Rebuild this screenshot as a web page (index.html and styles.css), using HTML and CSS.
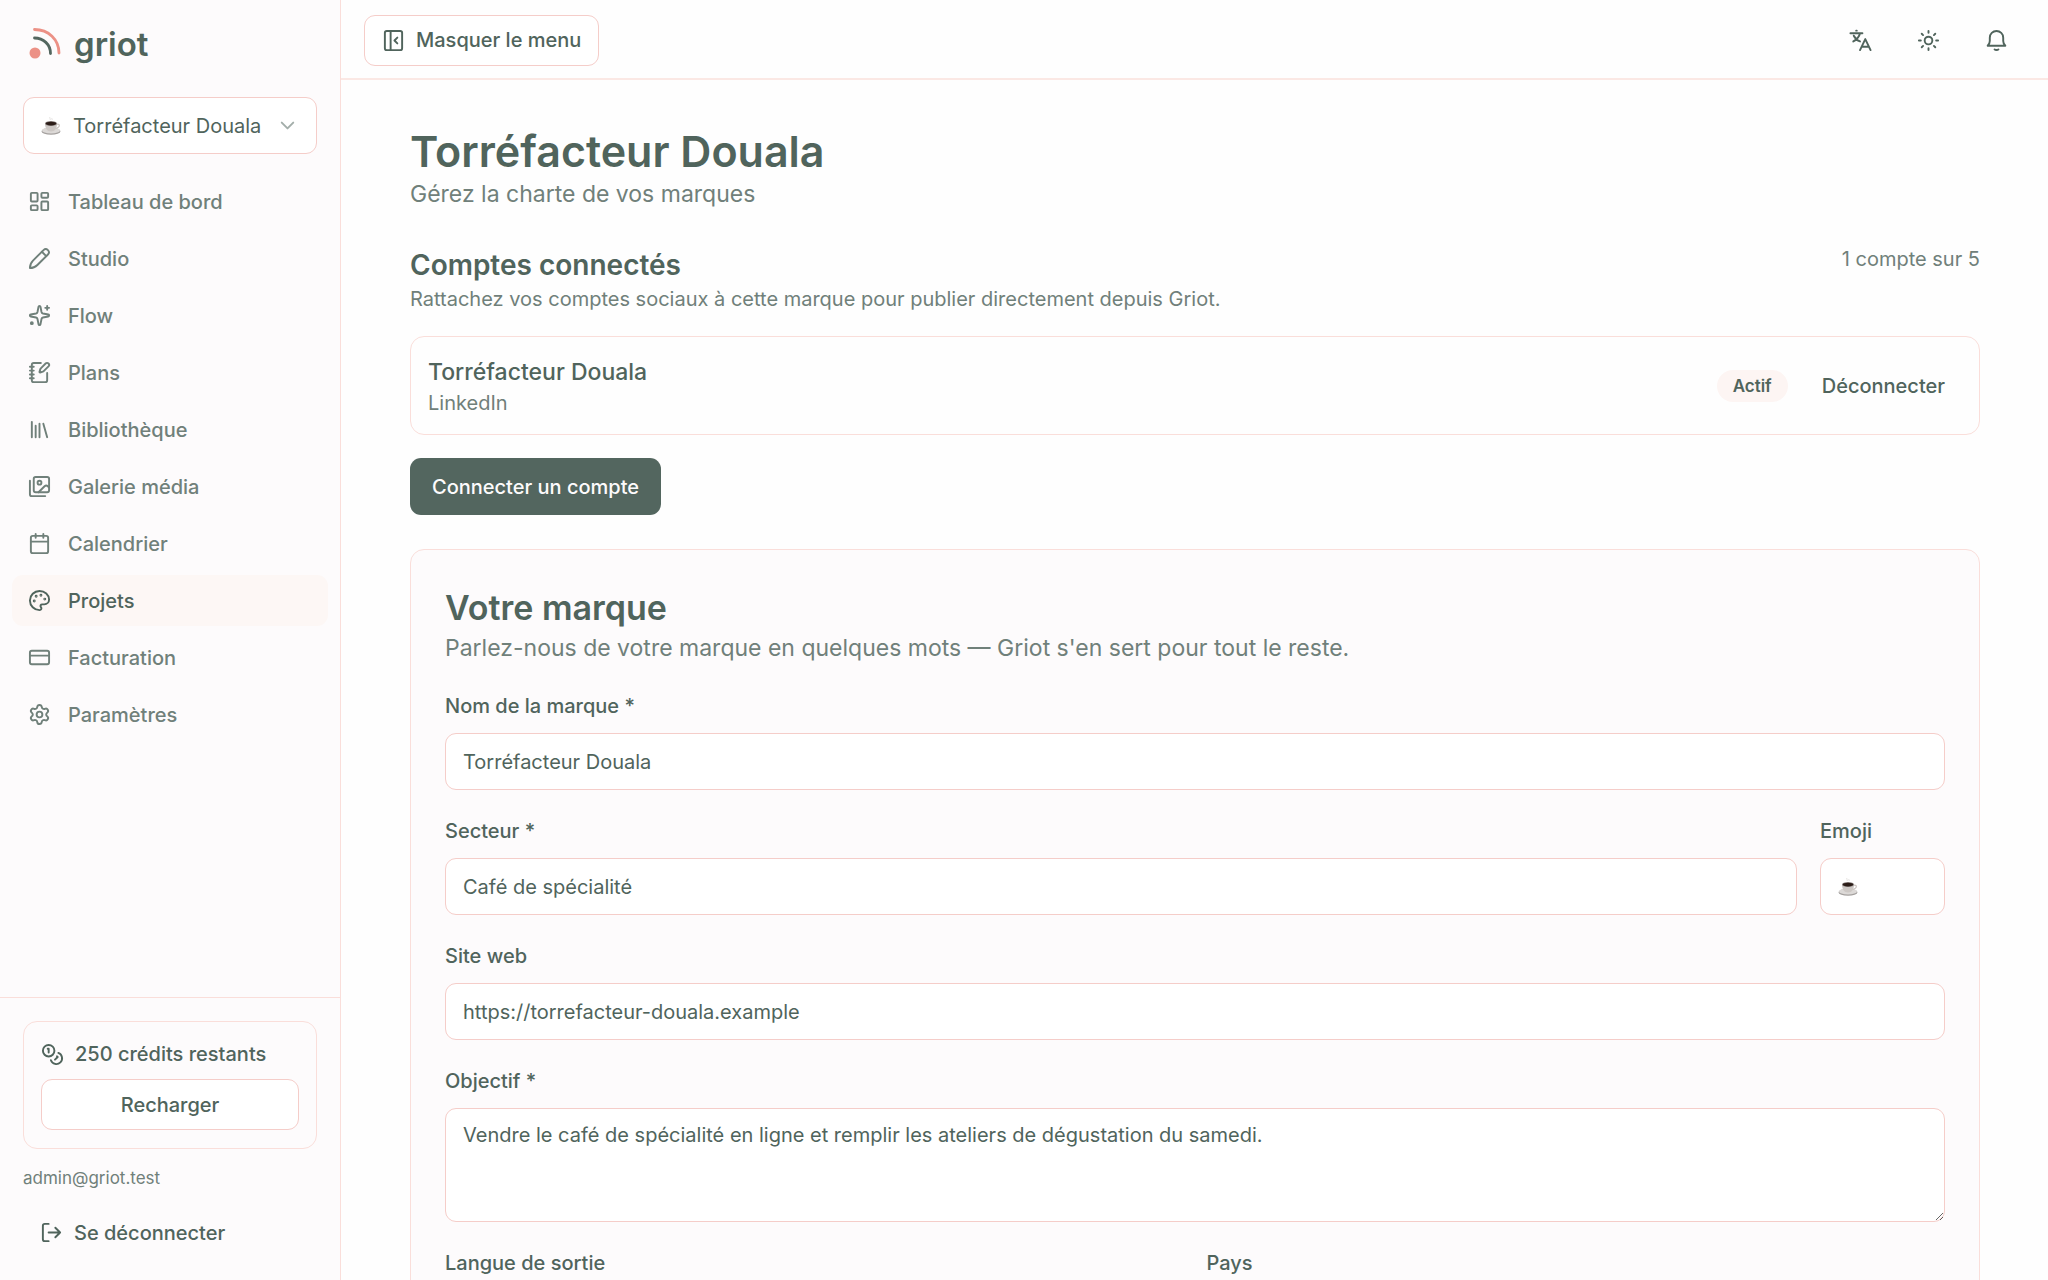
FILE: index.html
```
<!DOCTYPE html>
<html lang="fr">
<head>
    <meta charset="UTF-8">
    <meta name="viewport" content="width=device-width, initial-scale=1.0">
    <title>Griot - Torréfacteur Douala</title>
    <link rel="stylesheet" href="styles.css">
</head>
<body>
    <!-- Coffee cup shared by the project picker and the emoji field -->
    <svg class="defs" aria-hidden="true">
        <symbol id="coffee" viewBox="0 0 20 20">
            <path d="M9 1c-1 1 1 2 0 3M11 2c-.6.8.6 1.4 0 2" fill="none" stroke="#d8d5d3" stroke-width=".7"/>
            <ellipse cx="10" cy="15.2" rx="9.5" ry="3.6" fill="#a5a19f"/>
            <ellipse cx="10" cy="14.4" rx="9" ry="3" fill="#dcd9d7"/>
            <path d="M15 8.5c4-1.5 5 2.5-.5 4" fill="none" stroke="#c9c2be" stroke-width="1.2"/>
            <path d="M4 7.5c0 4.500 2 8 6 8s6-3.500 6-8Z" fill="#cdc8c5"/>
            <ellipse cx="10" cy="7.5" rx="6" ry="2.4" fill="#8b8380"/>
            <ellipse cx="10" cy="7.6" rx="5.2" ry="1.8" fill="#2c1d18"/>
        </symbol>
    </svg>

    <div class="app">
        <aside class="sidebar">
            <a class="logo" href="#">
                <svg class="logo-mark" viewBox="0 0 32 32" fill="none" stroke-width="2.8" stroke-linecap="round">
                    <circle cx="7" cy="25" r="5.5" fill="#ec9186"/>
                    <path d="M6.500 1.500c14 0 24.500 10 24.500 23.500" stroke="#ec9186"/>
                    <path d="M6.500 10c9 0 16 6.500 16 15.500" stroke="#53665f"/>
                </svg>
                griot
            </a>

            <div class="picker">
                <svg class="emoji" aria-hidden="true"><use href="#coffee"/></svg>
                <select aria-label="Projet">
                    <option>Torréfacteur Douala</option>
                </select>
                <svg class="chevron" viewBox="0 0 24 24"><path d="m6 9 6 6 6-6"/></svg>
            </div>

            <nav class="nav">
                <a href="#"><svg class="icon" viewBox="0 0 24 24"><rect x="3" y="3" width="7" height="9" rx="1"/><rect x="14" y="3" width="7" height="5" rx="1"/><rect x="14" y="12" width="7" height="9" rx="1"/><rect x="3" y="16" width="7" height="5" rx="1"/></svg>Tableau de bord</a>
                <a href="#"><svg class="icon" viewBox="0 0 24 24"><path d="M20.8 3.2a3.3 3.3 0 0 0-4.600 0L5.200 14.200C3.200 16.200 2 19 2 22c3 0 5.800-1.200 7.800-3.200l11-11a3.300 3.300 0 0 0 0-4.600Z"/><path d="m14.500 5 4.500 4.500"/></svg>Studio</a>
                <a href="#"><svg class="icon" viewBox="0 0 24 24"><path d="M11 2.800c.2-1.100 1.800-1.100 2 0l1.100 5.600a2 2 0 0 0 1.500 1.500l5.600 1.100c1.100.2 1.100 1.800 0 2l-5.600 1.100a2 2 0 0 0-1.500 1.500L13 21.200c-.2 1.100-1.800 1.100-2 0l-1.100-5.600a2 2 0 0 0-1.500-1.500L2.800 13c-1.100-.2-1.100-1.800 0-2l5.600-1.100a2 2 0 0 0 1.500-1.500Z"/><path d="M20 2v4M22 4h-4"/><circle cx="4" cy="20" r="1"/></svg>Flow</a>
                <a href="#"><svg class="icon" viewBox="0 0 24 24"><path d="M13.400 2H6a2 2 0 0 0-2 2v16a2 2 0 0 0 2 2h12a2 2 0 0 0 2-2v-7.400M2 6h4M2 10h4M2 14h4M2 18h4"/><path d="M21.378 5.626a1 1 0 1 0-3.004-3.004l-5.010 5.012a2 2 0 0 0-.506.854l-.837 2.870a.5.5 0 0 0 .620.620l2.870-.837a2 2 0 0 0 .854-.506z"/></svg>Plans</a>
                <a href="#"><svg class="icon" viewBox="0 0 24 24"><path d="m16 6 4 14M12 6v14M8 8v12M4 4v16"/></svg>Bibliothèque</a>
                <a href="#"><svg class="icon" viewBox="0 0 24 24"><path d="M18 22H4a2 2 0 0 1-2-2V6"/><path d="m22 13-1.296-1.296a2.410 2.410 0 0 0-3.408 0L11 18"/><circle cx="12" cy="8" r="2"/><rect x="6" y="2" width="16" height="16" rx="2"/></svg>Galerie média</a>
                <a href="#"><svg class="icon" viewBox="0 0 24 24"><path d="M8 2v4M16 2v4M3 10h18"/><rect x="3" y="4" width="18" height="18" rx="2"/></svg>Calendrier</a>
                <a class="active" href="#"><svg class="icon" viewBox="0 0 24 24"><path d="M12 22a1 1 0 0 1 0-20 10 9 0 0 1 10 9 5 5 0 0 1-5 5h-2.250a1.750 1.750 0 0 0-1.400 2.800l.3.400a1.750 1.750 0 0 1-1.400 2.800z"/><circle class="dot" cx="13.5" cy="6.5" r=".5"/><circle class="dot" cx="17.5" cy="10.5" r=".5"/><circle class="dot" cx="6.5" cy="12.5" r=".5"/><circle class="dot" cx="8.5" cy="7.5" r=".5"/></svg>Projets</a>
                <a href="#"><svg class="icon" viewBox="0 0 24 24"><rect x="2" y="5" width="20" height="14" rx="2"/><path d="M2 10h20"/></svg>Facturation</a>
                <a href="#"><svg class="icon" viewBox="0 0 24 24"><path d="M9.671 4.136a2.340 2.340 0 0 1 4.659 0 2.340 2.340 0 0 0 3.319 1.915 2.340 2.340 0 0 1 2.330 4.033 2.340 2.340 0 0 0 0 3.831 2.340 2.340 0 0 1-2.330 4.033 2.340 2.340 0 0 0-3.319 1.915 2.340 2.340 0 0 1-4.659 0 2.340 2.340 0 0 0-3.320-1.915 2.340 2.340 0 0 1-2.330-4.033 2.340 2.340 0 0 0 0-3.831A2.340 2.340 0 0 1 6.350 6.051a2.340 2.340 0 0 0 3.319-1.915"/><circle cx="12" cy="12" r="3"/></svg>Paramètres</a>
            </nav>

            <div class="sidebar-footer">
                <div class="credits">
                    <p><svg class="icon" viewBox="0 0 24 24"><circle cx="8" cy="8" r="6"/><path d="M18.090 10.370A6 6 0 1 1 10.340 18M7 6h1v4M16.710 13.880l.7.710-2.820 2.820"/></svg>250 crédits restants</p>
                    <button class="btn btn-outline" type="button">Recharger</button>
                </div>
                <p class="email">admin@griot.test</p>
                <button class="btn btn-ghost" type="button"><svg class="icon" viewBox="0 0 24 24"><path d="M9 21H5a2 2 0 0 1-2-2V5a2 2 0 0 1 2-2h4M16 17l5-5-5-5M21 12H9"/></svg>Se déconnecter</button>
            </div>
        </aside>

        <div class="page">
            <header class="topbar">
                <button class="btn btn-outline" type="button"><svg class="icon" viewBox="0 0 24 24"><rect x="3" y="2" width="18" height="20" rx="2"/><path d="M9 2v20M16 15l-3-3 3-3"/></svg>Masquer le menu</button>
                <div class="actions">
                    <button class="icon-btn" type="button" aria-label="Langue"><svg class="icon" viewBox="0 0 24 24"><path d="M1.500 4.500H14M7.500 1.700h.6M11.500 4.500c-.8 3.500-3.300 6.500-7 8.500M5 7c1.500 3 3.500 5 6.500 6M11.500 22 17 10.500 22.500 22M13.300 18.500h7.400"/></svg></button>
                    <button class="icon-btn" type="button" aria-label="Thème"><svg class="icon" viewBox="0 0 24 24"><circle cx="12" cy="12" r="4"/><path d="M12 2v2M12 20v2M4.930 4.930l1.410 1.410M17.660 17.660l1.410 1.410M2 12h2M20 12h2M6.340 17.660l-1.410 1.410M19.070 4.930l-1.410 1.410"/></svg></button>
                    <button class="icon-btn" type="button" aria-label="Notifications"><svg class="icon" viewBox="0 0 24 24"><path d="M2.800 17.500h18.400c-1.400-1.500-2.200-3-2.200-5V9a7 7 0 0 0-14 0v3.500c0 2-.8 3.500-2.200 5ZM10 21.300c.8.900 3.200.9 4 0"/></svg></button>
                </div>
            </header>

            <main class="content">
                <h1>Torréfacteur Douala</h1>
                <p class="lead">Gérez la charte de vos marques</p>

                <section class="accounts">
                    <div class="accounts-header">
                        <div>
                            <h2>Comptes connectés</h2>
                            <p>Rattachez vos comptes sociaux à cette marque pour publier directement depuis Griot.</p>
                        </div>
                        <p>1 compte sur 5</p>
                    </div>
                    <div class="account">
                        <div class="account-name">
                            <h3>Torréfacteur Douala</h3>
                            <p>LinkedIn</p>
                        </div>
                        <span class="badge">Actif</span>
                        <button class="btn btn-ghost" type="button">Déconnecter</button>
                    </div>
                    <button class="btn btn-primary" type="button">Connecter un compte</button>
                </section>

                <form class="brand">
                    <div>
                        <h2>Votre marque</h2>
                        <p class="lead">Parlez-nous de votre marque en quelques mots — Griot s'en sert pour tout le reste.</p>
                    </div>
                    <div class="field">
                        <label for="name">Nom de la marque *</label>
                        <input class="input" id="name" type="text" value="Torréfacteur Douala">
                    </div>
                    <div class="row">
                        <div class="field">
                            <label for="sector">Secteur *</label>
                            <input class="input" id="sector" type="text" value="Café de spécialité">
                        </div>
                        <div class="field field-emoji">
                            <label for="emoji">Emoji</label>
                            <div class="input">
                                <svg class="emoji" aria-hidden="true"><use href="#coffee"/></svg>
                                <input id="emoji" type="text">
                            </div>
                        </div>
                    </div>
                    <div class="field">
                        <label for="site">Site web</label>
                        <input class="input" id="site" type="url" value="https://torrefacteur-douala.example">
                    </div>
                    <div class="field">
                        <label for="goal">Objectif *</label>
                        <textarea class="input" id="goal">Vendre le café de spécialité en ligne et remplir les ateliers de dégustation du samedi.</textarea>
                    </div>
                    <div class="row">
                        <div class="field">
                            <label for="lang">Langue de sortie</label>
                            <select class="input" id="lang"></select>
                        </div>
                        <div class="field">
                            <label for="country">Pays</label>
                            <select class="input" id="country"></select>
                        </div>
                    </div>
                </form>
            </main>
        </div>
    </div>
</body>
</html>
```
FILE: styles.css
```
:root {
    --green: #50645c;
    --muted: #70807a;
    --panel: #fdfbfc;
    --accent: #fdf7f5;
    --border: #fadeda;
    --input: #f5cdc9;
}
* {
    box-sizing: border-box;
}
body {
    margin: 0;
    background: #fefefe;
    color: var(--green);
    font-family: Inter, "Liberation Sans", sans-serif;
    font-size: 20px;
    line-height: 28px;
}
h1, h2, h3, p {
    margin: 0;
}
a {
    color: inherit;
    text-decoration: none;
}
button, input, select, textarea {
    font: inherit;
    color: inherit;
}
.defs {
    display: none;
}
.icon {
    width: 23px;
    height: 23px;
    flex-shrink: 0;
    fill: none;
    stroke: currentColor;
    stroke-width: 2;
    stroke-linecap: round;
    stroke-linejoin: round;
}
.icon .dot {
    fill: currentColor;
}
.emoji {
    width: 20px;
    height: 20px;
    flex-shrink: 0;
}
.app {
    display: flex;
    height: 100vh;
}

/* Sidebar */
.sidebar {
    width: 341px;
    flex-shrink: 0;
    display: flex;
    flex-direction: column;
    background: var(--panel);
    border-right: 1px solid var(--border);
}
.logo {
    display: flex;
    align-items: center;
    gap: 14px;
    margin: 21px 28px 30px;
    font-size: 33px;
    font-weight: 600;
    line-height: 46px;
}
.logo-mark {
    width: 32px;
    height: 32px;
    overflow: visible;
}
.picker {
    display: flex;
    align-items: center;
    gap: 12px;
    height: 57px;
    margin: 0 23px 22px;
    padding: 0 17px;
    background: #fff;
    border: 1px solid var(--input);
    border-radius: 11px;
}
.picker select {
    flex: 1;
    min-width: 0;
    padding: 0;
    appearance: none;
    border: none;
    background: none;
}
.chevron {
    width: 23px;
    height: 23px;
    fill: none;
    stroke: #a3aeaa;
    stroke-width: 2;
    stroke-linecap: round;
    stroke-linejoin: round;
}
.nav {
    flex: 1;
    display: flex;
    flex-direction: column;
    gap: 6px;
    padding: 0 12px;
}
.nav a {
    display: flex;
    align-items: center;
    gap: 17px;
    height: 51px;
    padding: 0 16px;
    border-radius: 11px;
    color: var(--muted);
    font-weight: 500;
}
.nav .active {
    background: var(--accent);
    color: var(--green);
}
.sidebar-footer {
    display: flex;
    flex-direction: column;
    align-items: flex-start;
    gap: 17px;
    padding: 23px 23px 22px;
    border-top: 1px solid var(--border);
}
.credits {
    align-self: stretch;
    display: flex;
    flex-direction: column;
    gap: 11px;
    padding: 18px 17px;
    border: 1px solid var(--border);
    border-radius: 14px;
}
.credits p {
    display: flex;
    align-items: center;
    gap: 11px;
    font-weight: 500;
}
.email {
    color: var(--muted);
    font-size: 17px;
    line-height: 24px;
}

/* Buttons */
.btn {
    display: flex;
    align-items: center;
    justify-content: center;
    gap: 11px;
    height: 51px;
    padding: 0 17px;
    border: 1px solid transparent;
    border-radius: 11px;
    background: none;
    font-weight: 500;
    cursor: pointer;
}
.btn-outline {
    background: #fff;
    border-color: var(--input);
}
.btn-ghost {
    padding: 0 16px;
}
.btn-primary {
    height: 57px;
    padding: 0 21px;
    background: #53665f;
    color: #fdfbfc;
}
.icon-btn {
    display: flex;
    align-items: center;
    justify-content: center;
    width: 57px;
    height: 51px;
    padding: 0;
    border: none;
    background: none;
    cursor: pointer;
}

/* Page */
.page {
    flex: 1;
    min-width: 0;
    display: flex;
    flex-direction: column;
}
.topbar {
    display: flex;
    align-items: center;
    justify-content: space-between;
    flex-shrink: 0;
    height: 80px;
    padding: 2px 23px 0;
    border-bottom: 2px solid #fbe8e4;
}
.actions {
    display: flex;
    gap: 11px;
}
.content {
    flex: 1;
    min-height: 0;
    padding: 46px 68px 46px 69px;
    overflow-y: auto;
    scrollbar-width: none;
}
h1 {
    font-size: 43px;
    font-weight: 600;
    line-height: 51px;
}
.lead {
    color: var(--muted);
    font-size: 23px;
    line-height: 34px;
}
.accounts {
    margin: 34px 0;
}
.accounts-header {
    display: flex;
    justify-content: space-between;
    margin-bottom: 23px;
    color: var(--muted);
}
.accounts h2 {
    color: var(--green);
    font-size: 28px;
    font-weight: 600;
    line-height: 40px;
}
.account {
    display: flex;
    align-items: center;
    gap: 17px;
    margin-bottom: 23px;
    padding: 18px 17px 17px;
    border: 1px solid var(--border);
    border-radius: 14px;
}
.account-name {
    flex: 1;
    color: var(--muted);
}
.account h3 {
    color: var(--green);
    font-size: 23px;
    font-weight: 500;
    line-height: 34px;
}
.badge {
    padding: 4px 16px;
    border-radius: 16px;
    background: #fdf5f3;
    font-size: 17px;
    font-weight: 600;
    line-height: 24px;
}

/* Brand form */
.brand {
    display: flex;
    flex-direction: column;
    gap: 27px;
    padding: 35px 34px;
    background: var(--panel);
    border: 1px solid var(--border);
    border-radius: 14px;
}
.brand h2 {
    font-size: 34px;
    font-weight: 600;
    line-height: 46px;
}
.row {
    display: flex;
    gap: 23px;
}
.field {
    flex: 1;
    display: flex;
    flex-direction: column;
    gap: 13px;
}
.field label {
    font-weight: 500;
}
.field-emoji {
    flex: 0 0 125px;
}
.input {
    display: flex;
    align-items: center;
    width: 100%;
    height: 57px;
    padding: 0 17px;
    background: #fff;
    border: 1px solid var(--input);
    border-radius: 11px;
}
.input input {
    width: 100%;
    min-width: 0;
    border: none;
    background: none;
}
textarea.input {
    height: 114px;
    padding: 12px 17px;
    resize: vertical;
}
```
